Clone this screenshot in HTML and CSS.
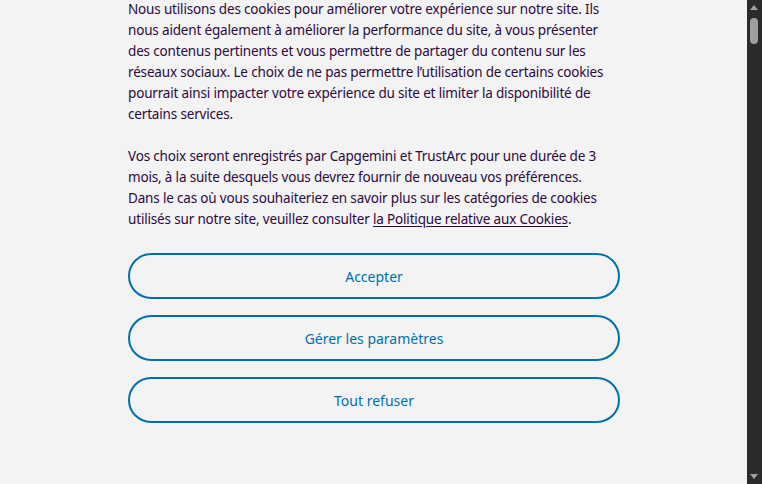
FILE: index.html
```html
<!DOCTYPE html>
<html lang="fr">
<head>
<meta charset="utf-8">
<link rel="stylesheet" href="styles.css">
</head>
<body>
<main class="consent">
  <p class="text first">Nous utilisons des cookies pour améliorer votre expérience sur notre site. Ils nous aident également à améliorer la performance du site, à vous présenter des contenus pertinents et vous permettre de partager du contenu sur les réseaux sociaux. Le choix de ne pas permettre l’utilisation de certains cookies pourrait ainsi impacter votre expérience du site et limiter la disponibilité de certains services.</p>
  <p class="text">Vos choix seront enregistrés par Capgemini et TrustArc pour une durée de 3 mois, à la suite desquels vous devrez fournir de nouveau vos préférences. Dans le cas où vous souhaiteriez en savoir plus sur les catégories de cookies utilisés sur notre site, veuillez consulter <a class="link" href="#">la Politique relative aux Cookies</a>.</p>
  <div class="actions">
    <button class="btn">Accepter</button>
    <button class="btn">Gérer les paramètres</button>
    <button class="btn">Tout refuser</button>
  </div>
</main>
<div class="scrollbar">
  <span class="arrow up"></span>
  <span class="thumb"></span>
  <span class="arrow down"></span>
</div>
</body>
</html>
```

FILE: styles.css
```css
html, body {
  margin: 0;
  padding: 0;
  background: #f3f3f3;
  overflow: hidden;
  height: 100%;
}
body {
  font-family: "Noto Sans", "Open Sans", sans-serif;
  color: #2b0a3d;
}
.consent {
  width: 492px;
  margin-left: 128px;
  padding-top: 0;
}
.text {
  max-width: 484px;
  font-size: 13.5px;
  letter-spacing: -0.17px;
  line-height: 21px;
  margin: 0 0 21px 0;
}
.text.first {
  margin-top: -1px;
}
.link {
  color: #2b0a3d;
  text-decoration: underline;
  text-underline-offset: 2px;
}
.actions {
  display: flex;
  flex-direction: column;
  gap: 16px;
  margin-top: 23px;
}
.btn {
  height: 46px;
  border: 2px solid #0070ad;
  border-radius: 23px;
  background: transparent;
  color: #0070ad;
  font-family: inherit;
  font-size: 14px;
  cursor: pointer;
}
.scrollbar {
  position: fixed;
  top: 0;
  right: 0;
  width: 15px;
  height: 100%;
  background: #2b2b2b;
}
.thumb {
  position: absolute;
  left: 3px;
  top: 18px;
  width: 8px;
  height: 26px;
  border-radius: 4px;
  background: #9f9f9f;
}
.arrow {
  position: absolute;
  left: 3px;
  width: 0;
  height: 0;
  border-left: 4px solid transparent;
  border-right: 4px solid transparent;
}
.arrow.up {
  top: 5px;
  border-bottom: 5px solid #a3a3a3;
}
.arrow.down {
  bottom: 5px;
  border-top: 5px solid #a3a3a3;
}
```
